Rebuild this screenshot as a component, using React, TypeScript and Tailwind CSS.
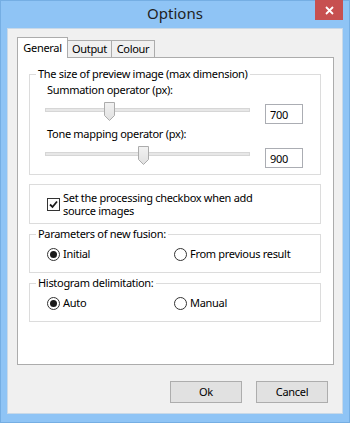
import React from "react";

const font = { fontFamily: '"Segoe UI", "Noto Sans", sans-serif' };

const Thumb = ({ left, top }: { left: string; top: string }) => (
  <svg
    className={`absolute ${left} ${top}`}
    width="11"
    height="19"
    viewBox="0 0 11 19"
  >
    <defs>
      <linearGradient id="tg" x1="0" y1="0" x2="0" y2="1">
        <stop offset="0" stopColor="#f2f2f2" />
        <stop offset="1" stopColor="#e0e0e0" />
      </linearGradient>
    </defs>
    <path
      d="M0.5 0.5 H10.5 V13.5 L5.5 18.5 L0.5 13.5 Z"
      fill="url(#tg)"
      stroke="#acacac"
    />
  </svg>
);

const SliderRow = ({ value, thumb }: { value: string; thumb: string }) => (
  <div className="flex h-[20px] items-start">
    <div className="relative ml-[15px] h-[20px] w-[205px]">
      <div className="absolute left-0 right-0 top-[4px] h-[4px] border border-[#d6d6d6] bg-[#e7e7e7]" />
      <Thumb left={thumb} top="top-[-2px]" />
    </div>
    <div className="ml-[15px] flex h-[20px] w-[38px] items-center border border-[#abadb3] bg-white pl-[4px] leading-none">
      {value}
    </div>
  </div>
);

const Radio = ({ checked, label }: { checked?: boolean; label: string }) => (
  <div className="flex items-center gap-[3px]">
    <div className="flex h-[13px] w-[13px] items-center justify-center rounded-full border border-[#333] bg-white">
      {checked && <div className="h-[7px] w-[7px] rounded-full bg-[#1a1a1a]" />}
    </div>
    <span>{label}</span>
  </div>
);

export default function App() {
  return (
    <div
      className="flex h-[423px] w-[350px] flex-col border border-[#75aee3] bg-[#8fc4f5] text-[11px] tracking-[-0.3px] text-black"
      style={font}
    >
      <div className="relative flex h-[27px] shrink-0 items-start justify-center tracking-normal">
        <span className="mt-[2px] text-[15px] leading-[20px] text-[#1f1f1f]">Options</span>
        <div className="absolute right-[6px] top-[-1px] flex h-[20px] w-[28px] items-center justify-center bg-[#c75050]">
          <svg width="9" height="9" viewBox="0 0 9 9">
            <path d="M1 1 L8 8 M8 1 L1 8" stroke="#fff" strokeWidth="1.8" />
          </svg>
        </div>
      </div>
      <div className="mx-[6px] flex flex-1 flex-col border border-[#c9d9e8] bg-[#f0f0f0] pl-[9px] pr-[9px] pt-[8px]">
        <div className="flex h-[20px] items-end">
          <div className="relative z-10 -mb-px flex h-[21px] w-[51px] items-start justify-center border border-b-0 border-[#acacac] bg-white pt-[2px]">
            General
          </div>
          <div className="flex h-[17px] w-[44px] items-center justify-center border border-l-0 border-b-0 border-[#acacac] bg-[#f0f0f0]">
            Output
          </div>
          <div className="flex h-[17px] w-[43px] items-center justify-center border border-l-0 border-b-0 border-[#acacac] bg-[#f0f0f0]">
            Colour
          </div>
        </div>
        <div className="flex h-[308px] w-[317px] flex-col border border-[#acacac] bg-white px-[11px] pt-[9px] leading-[14px]">
          <fieldset className="h-[108px] w-[292px] border border-[#dcdcdc]">
            <legend className="ml-[6px] px-[2px]">The size of preview image (max dimension)</legend>
            <div className="ml-[17px] mt-[2px]">Summation operator (px):</div>
            <div className="mt-[7px]">
              <SliderRow value="700" thumb="left-[59px]" />
            </div>
            <div className="ml-[17px] mt-[3px]">Tone mapping operator (px):</div>
            <div className="mt-[7px]">
              <SliderRow value="900" thumb="left-[93px]" />
            </div>
          </fieldset>
          <div className="mt-[9px] flex h-[40px] w-[292px] items-center border border-[#dcdcdc] pl-[17px]">
            <div className="flex h-[13px] w-[13px] shrink-0 items-center justify-center border border-[#333] bg-white">
              <svg width="11" height="11" viewBox="0 0 11 11">
                <path d="M2 5.5 L4.5 8 L9 2.5" fill="none" stroke="#1a1a1a" strokeWidth="1.8" />
              </svg>
            </div>
            <div className="ml-[3px] leading-[13px]">
              Set the processing checkbox when add
              <br />
              source images
            </div>
          </div>
          <fieldset className="mt-[3px] h-[46px] w-[292px] border border-[#dcdcdc]">
            <legend className="ml-[6px] px-[2px]">Parameters of new fusion:</legend>
            <div className="ml-[17px] mt-[6px] flex">
              <div className="w-[127px]">
                <Radio checked label="Initial" />
              </div>
              <Radio label="From previous result" />
            </div>
          </fieldset>
          <fieldset className="mt-[3px] h-[46px] w-[292px] border border-[#dcdcdc]">
            <legend className="ml-[6px] px-[2px]">Histogram delimitation:</legend>
            <div className="ml-[17px] mt-[6px] flex">
              <div className="w-[127px]">
                <Radio checked label="Auto" />
              </div>
              <Radio label="Manual" />
            </div>
          </fieldset>
        </div>
        <div className="mt-[16px] flex justify-end gap-[14px] pr-[5px]">
          <button className="h-[22px] w-[72px] border border-[#adadad] bg-[#e1e1e1]">Ok</button>
          <button className="h-[22px] w-[72px] border border-[#adadad] bg-[#e1e1e1]">Cancel</button>
        </div>
      </div>
      <div className="h-[8px] shrink-0" />
    </div>
  );
}
